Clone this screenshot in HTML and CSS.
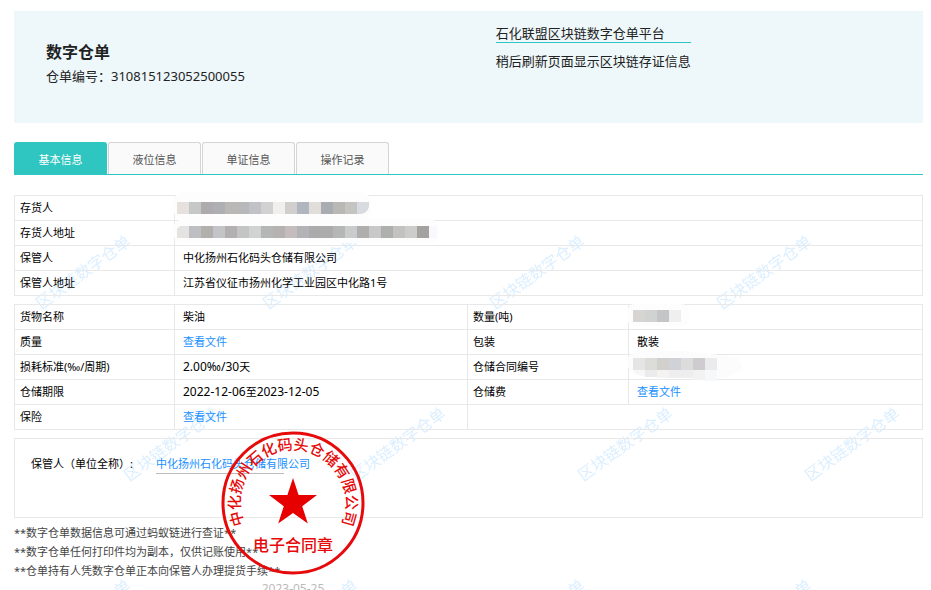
FILE: index.html
```html
<!DOCTYPE html>
<html lang="zh-CN">
<head>
    <meta charset="UTF-8">
    <meta name="viewport" content="width=device-width, initial-scale=1.0">
    <link rel="stylesheet" href="styles.css">
    <title>数字仓单</title>
</head>
<body>
    <!-- watermark -->
    <svg class="watermark" aria-hidden="true">
        <defs>
            <pattern id="wm" width="227" height="344" patternUnits="userSpaceOnUse">
                <text transform="translate(83 130) rotate(-36)" y="6">区块链数字仓单</text>
                <text transform="translate(171 302) rotate(-36)" y="6">区块链数字仓单</text>
                <text transform="translate(-56 302) rotate(-36)" y="6">区块链数字仓单</text>
            </pattern>
        </defs>
        <rect width="100%" height="100%" fill="url(#wm)"/>
    </svg>

    <header class="banner">
        <div class="banner-left">
            <h1>数字仓单</h1>
            <p>仓单编号：310815123052500055</p>
        </div>
        <div class="banner-right">
            <a href="#">石化联盟区块链数字仓单平台</a>
            <p>稍后刷新页面显示区块链存证信息</p>
        </div>
    </header>

    <nav class="tabs">
        <button type="button" class="active">基本信息</button>
        <button type="button">液位信息</button>
        <button type="button">单证信息</button>
        <button type="button">操作记录</button>
    </nav>

    <main>
        <table class="info">
            <colgroup>
                <col class="c1"><col>
            </colgroup>
            <tr>
                <th scope="row">存货人</th>
                <td>
                    <svg class="mosaic" width="200" height="27" aria-hidden="true">
                        <rect width="198" height="27" rx="10" fill="#fdfdfd"/>
                        <g transform="translate(4 10)">
                            <rect width="12" height="12" fill="#e6e1dd"/>
                            <rect x="12" width="12" height="12" fill="#c5c8c7"/>
                            <rect x="24" width="12" height="12" fill="#adabad"/>
                            <rect x="36" width="12" height="12" fill="#adafb2"/>
                            <rect x="48" width="12" height="12" fill="#b9b8b7"/>
                            <rect x="60" width="12" height="12" fill="#b6b8ba"/>
                            <rect x="72" width="12" height="12" fill="#c3c1c8"/>
                            <rect x="84" width="12" height="12" fill="#d1d1d2"/>
                            <rect x="96" width="12" height="12" fill="#f0efee"/>
                            <rect x="108" width="12" height="12" fill="#d0cfcd"/>
                            <rect x="120" width="12" height="12" fill="#b1b5bd"/>
                            <rect x="132" width="12" height="12" fill="#e0dddb"/>
                            <rect x="144" width="12" height="12" fill="#a9adb1"/>
                            <rect x="156" width="12" height="12" fill="#b9b8b4"/>
                            <rect x="168" width="12" height="12" fill="#c4c4c3"/>
                            <path d="M180 0h12v5q-2 7-9 7h-3z" fill="#d8dce1"/>
                        </g>
                    </svg>
                </td>
            </tr>
            <tr>
                <th scope="row">存货人地址</th>
                <td>
                    <svg class="mosaic" width="270" height="27" aria-hidden="true">
                        <rect y="2" width="266" height="24" rx="10" fill="#fdfdfd"/>
                        <g transform="translate(4 9)">
                            <path d="M3 0h9v12H0V3z" fill="#e4e3e2"/>
                            <rect x="12" width="12" height="12" fill="#bdbfc3"/>
                            <rect x="24" width="12" height="12" fill="#b2b0ac"/>
                            <rect x="36" width="12" height="12" fill="#c2c4c7"/>
                            <rect x="48" width="12" height="12" fill="#b2b0b0"/>
                            <rect x="60" width="12" height="12" fill="#c2c5c4"/>
                            <rect x="72" width="12" height="12" fill="#d1d3d2"/>
                            <rect x="84" width="12" height="12" fill="#b4b7b6"/>
                            <rect x="96" width="12" height="12" fill="#b7b2b2"/>
                            <rect x="108" width="12" height="12" fill="#c4bcbd"/>
                            <rect x="120" width="12" height="12" fill="#b1b3b7"/>
                            <rect x="132" width="12" height="12" fill="#ababab"/>
                            <rect x="144" width="12" height="12" fill="#adacac"/>
                            <rect x="156" width="12" height="12" fill="#b4b7b6"/>
                            <rect x="168" width="12" height="12" fill="#c9cbcd"/>
                            <rect x="180" width="12" height="12" fill="#afaeac"/>
                            <rect x="192" width="12" height="12" fill="#c8c8c9"/>
                            <rect x="204" width="12" height="12" fill="#adb0af"/>
                            <rect x="216" width="12" height="12" fill="#c4c2c1"/>
                            <rect x="228" width="12" height="12" fill="#cccccb"/>
                            <rect x="240" width="12" height="12" fill="#a3a2a1"/>
                            <rect x="252" width="8" height="12" fill="#f8f9fc"/>
                        </g>
                    </svg>
                </td>
            </tr>
            <tr>
                <th scope="row">保管人</th>
                <td>中化扬州石化码头仓储有限公司</td>
            </tr>
            <tr>
                <th scope="row">保管人地址</th>
                <td>江苏省仪征市扬州化学工业园区中化路1号</td>
            </tr>
        </table>

        <table class="info">
            <colgroup>
                <col class="c1"><col class="c2"><col class="c3"><col>
            </colgroup>
            <tr>
                <th scope="row">货物名称</th>
                <td>柴油</td>
                <th scope="row">数量(吨)</th>
                <td>
                    <svg class="mosaic" width="64" height="27" aria-hidden="true">
                        <rect y="3" width="62" height="22" rx="8" fill="#fdfdfd"/>
                        <g transform="translate(6 9)">
                            <rect x="0" width="12" height="12" fill="#d6d5d1"/>
                            <rect x="12" width="12" height="12" fill="#d0d3d2"/>
                            <rect x="24" width="12" height="12" fill="#c4c5c7"/>
                            <rect x="36" width="12" height="12" fill="#efefef"/>
                        </g>
                    </svg>
                </td>
            </tr>
            <tr>
                <th scope="row">质量</th>
                <td><a href="#">查看文件</a></td>
                <th scope="row">包装</th>
                <td>散装</td>
            </tr>
            <tr>
                <th scope="row">损耗标准(‰/周期)</th>
                <td><span class="num">2.00‰/30</span>天</td>
                <th scope="row">仓储合同编号</th>
                <td>
                    <svg class="mosaic" width="120" height="30" aria-hidden="true">
                        <path d="M0 10Q2 0 14 0h46q30 4 50 6 6 8 4 14-16 9-40 8L10 24Q0 20 0 10z" fill="#fcfcfc"/>
                        <g transform="translate(6 7)">
                            <rect x="0" width="12" height="12" fill="#e5e5e6"/>
                            <rect x="12" width="12" height="12" fill="#dcddd8"/>
                            <rect x="24" width="12" height="12" fill="#d2d0cd"/>
                            <rect x="36" width="12" height="12" fill="#d0d2d8"/>
                            <rect x="48" width="12" height="12" fill="#dddcdd"/>
                            <rect x="60" width="12" height="12" fill="#cfcccf"/>
                            <rect x="72" width="12" height="12" fill="#ebebed"/>
                            <path d="M0 12h12v6q-9 0-12-6z" fill="#f7f7f7"/>
                            <rect x="12" y="12" width="12" height="7" fill="#ebebeb"/>
                            <rect x="24" y="12" width="12" height="8" fill="#f5f3f2"/>
                            <rect x="36" y="12" width="24" height="8" fill="#eeeeee"/>
                            <rect x="60" y="12" width="12" height="10" fill="#f2f2f2"/>
                            <rect x="72" y="12" width="12" height="11" fill="#f6f8fa"/>
                        </g>
                    </svg>
                </td>
            </tr>
            <tr>
                <th scope="row">仓储期限</th>
                <td><span class="num">2022-12-06</span>至<span class="num">2023-12-05</span></td>
                <th scope="row">仓储费</th>
                <td><a href="#">查看文件</a></td>
            </tr>
            <tr>
                <th scope="row">保险</th>
                <td><a href="#">查看文件</a></td>
                <td colspan="2"></td>
            </tr>
        </table>

        <section class="sign">
            <span class="sign-label">保管人（单位全称）:</span>
            <div class="sign-value">
                <a href="#">中化扬州石化码头仓储有限公司</a>
                <figure class="stamp">
                    <svg width="144" height="144" viewBox="-72 -72 144 144">
                        <path id="arc" d="M0 53A53 53 0 0 1 0 -53A53 53 0 0 1 0 53" fill="none"/>
                        <circle r="70" fill="none" stroke="#e60a0a" stroke-width="3"/>
                        <path fill="#e60000" d="M0 -25L5.6 -8H24L9.2 3.2L14.8 20.5L0 10L-14.8 20.5L-9.2 3.2L-24 -8H-5.6z"/>
                        <text class="arc-text"><textPath href="#arc" startOffset="50%">中化扬州石化码头仓储有限公司</textPath></text>
                        <text class="seal-text" y="48">电子合同章</text>
                    </svg>
                    <figcaption>2023-05-25</figcaption>
                </figure>
            </div>
        </section>

        <div class="notes">
            <p>**数字仓单数据信息可通过蚂蚁链进行查证**</p>
            <p>**数字仓单任何打印件均为副本，仅供记账使用**</p>
            <p>**仓单持有人凭数字仓单正本向保管人办理提货手续**</p>
        </div>
    </main>
</body>
</html>
```

FILE: styles.css
```css
html {
    overflow: hidden;
}

body {
    position: relative;
    margin: 0;
    padding: 11px 8px 0 14px;
    min-height: 100vh;
    box-sizing: border-box;
    font-family: "Noto Sans", "Noto Sans CJK SC", sans-serif;
    font-size: 11px;
    color: #000;
    background-color: #fff;
}

h1, p, figure {
    margin: 0;
}

a {
    color: #1890ff;
    text-decoration: none;
}

/* starts below the banner */
.watermark {
    position: absolute;
    top: 142px;
    left: 0;
    width: 100%;
    height: calc(100% - 142px);
    z-index: -1;
    pointer-events: none;
}

.watermark text {
    font-size: 16px;
    fill: #dcefff;
    text-anchor: middle;
}

/* top banner */
.banner {
    display: flex;
    height: 112px;
    background-color: #eef8fa;
    color: #222;
    font-size: 13px;
}

.banner-left {
    width: 53%;
    box-sizing: border-box;
    padding: 28px 0 0 32px;
}

.banner-left h1 {
    font-size: 16px;
    line-height: 26px;
}

.banner-left p {
    line-height: 22px;
}

.banner-right {
    padding-top: 14px;
}

.banner-right a {
    display: block;
    color: #222;
    line-height: 17px;
    border-bottom: 1px solid #2fc5c0;
}

.banner-right p {
    margin-top: 8px;
    line-height: 20px;
}

/* tabs */
.tabs {
    display: flex;
    gap: 1px;
    margin: 19px 0 20px;
    border-bottom: 1px solid #2fc5c0;
}

.tabs button {
    width: 93px;
    height: 32px;
    padding: 0;
    border: 1px solid #d4d4d4;
    border-bottom: none;
    border-radius: 3px 3px 0 0;
    background-color: #fafafa;
    color: #555;
    font-family: inherit;
    font-size: 11px;
    cursor: pointer;
}

.tabs .active {
    border-color: #2fc5c0;
    background-color: #2fc5c0;
    color: #fff;
}

/* tables */
.info {
    width: 100%;
    margin-bottom: 8px;
    border-collapse: collapse;
    table-layout: fixed;
}

.info th,
.info td {
    position: relative;
    height: 24px;
    padding: 0 8px;
    border: 1px solid #e8e8e8;
    line-height: 24px;
    font-weight: normal;
    text-align: left;
    white-space: nowrap;
}

.info th {
    padding: 0 5px;
}

.c1 {
    width: 160px;
}

.c2 {
    width: 293px;
}

.c3 {
    width: 161px;
}

.num {
    font-size: 12px;
}

.mosaic {
    position: absolute;
    top: -4px;
    left: -2px;
}

/* signature box */
.sign {
    display: flex;
    height: 78px;
    border: 1px solid #e8e8e8;
}

.sign-label {
    width: 125px;
    padding-left: 16px;
    line-height: 50px;
}

.sign-value {
    position: relative;
    width: 128px;
    height: 18px;
    margin-top: 16px;
    border-bottom: 1px solid #bbb;
    line-height: 18px;
    white-space: nowrap;
}

.stamp {
    position: absolute;
    top: -24px;
    left: 65px;
    width: 144px;
    text-align: center;
}

.stamp svg {
    display: block;
}

.stamp text {
    fill: #e60a0a;
    text-anchor: middle;
    font-weight: 500;
}

.arc-text {
    font-size: 15px;
}

.seal-text {
    font-size: 16px;
}

.stamp figcaption {
    margin-top: 6px;
    color: #bbb;
    font-size: 12px;
    line-height: 16px;
}

.notes {
    margin-top: 5px;
    color: #444;
    line-height: 19px;
}
```
